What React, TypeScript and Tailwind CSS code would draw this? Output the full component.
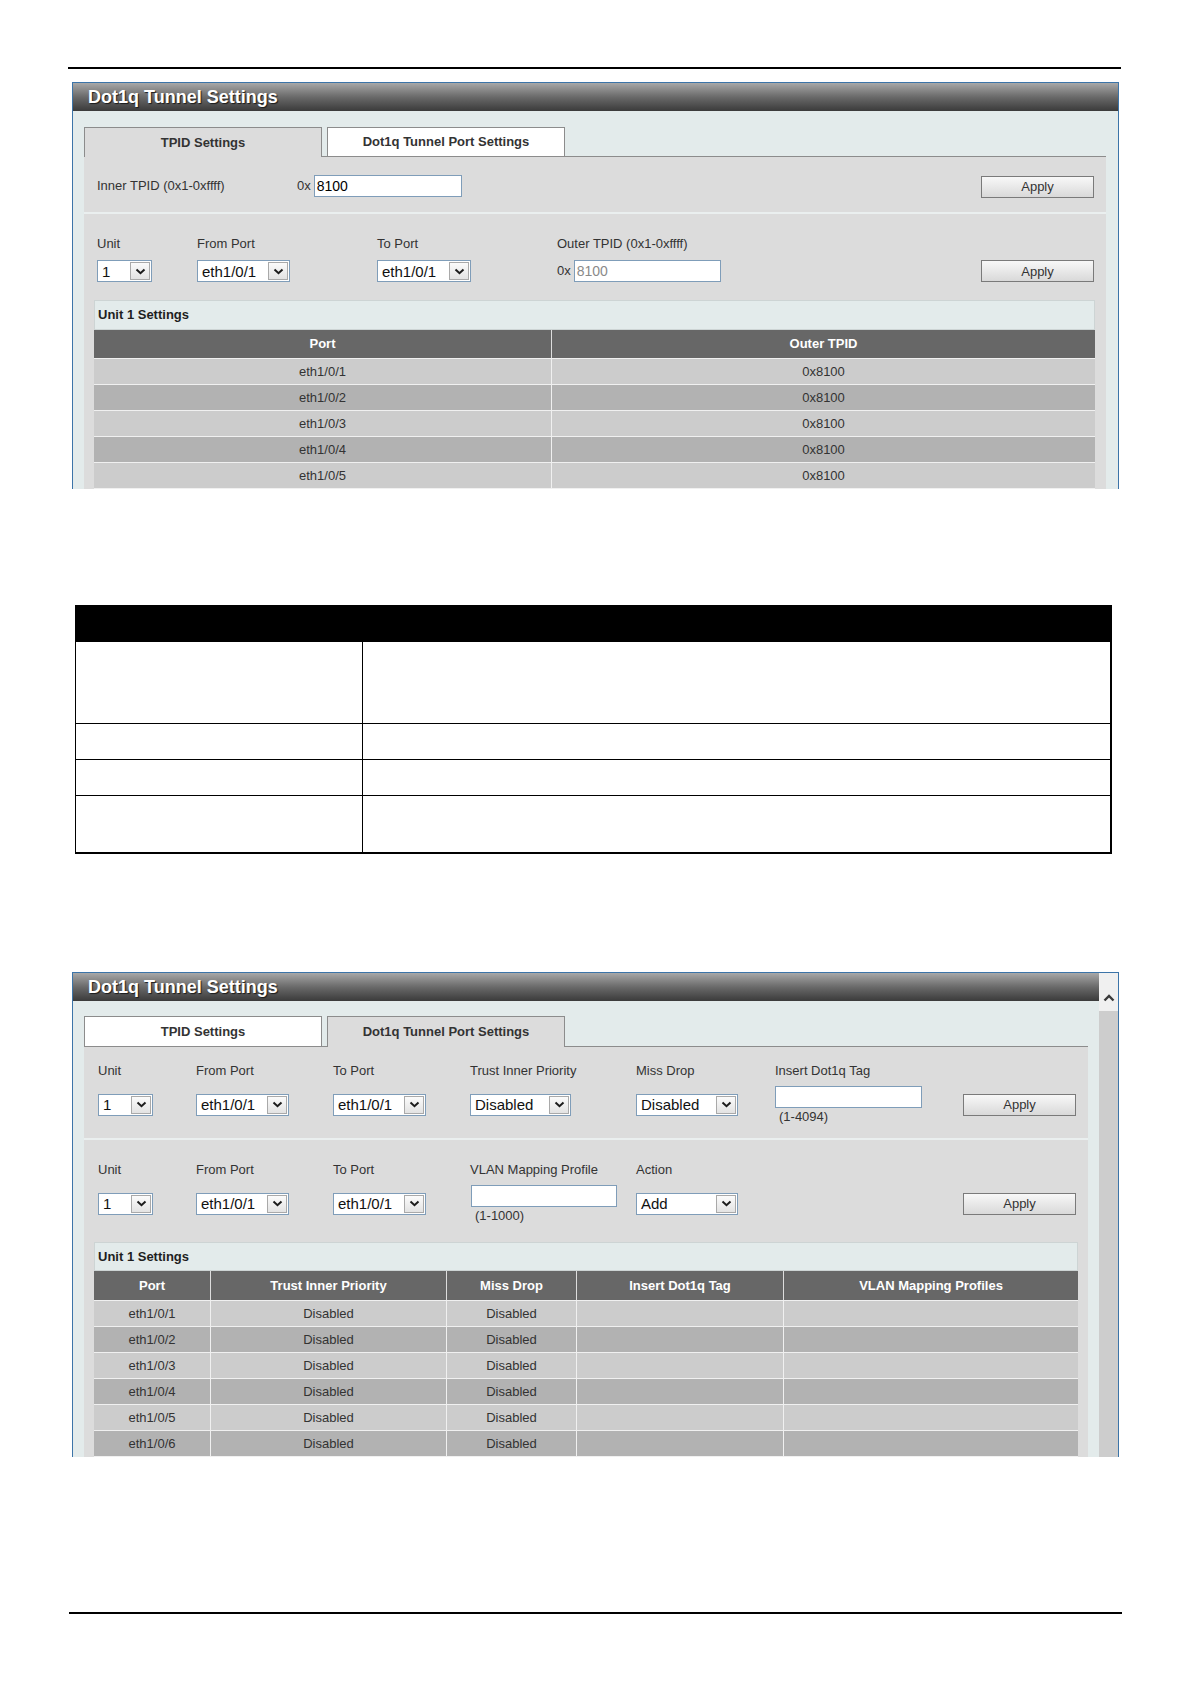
import type { ReactNode } from 'react';

const Chevron = () => (
  <svg width="11" height="7" viewBox="0 0 11 7">
    <polyline points="1.5,1.5 5.5,5.2 9.5,1.5" fill="none" stroke="#1c1c1c" strokeWidth="2" />
  </svg>
);

const Select = ({ value, width }: { value: string; width: string }) => (
  <div className={`${width} h-[22px] flex items-center border border-[#7f9db9] bg-white`}>
    <span className="flex-1 pl-[4px] text-[15px] leading-none text-[#111]">{value}</span>
    <span className="w-[20px] h-[18px] mr-[1px] flex items-center justify-center border border-[#a9a9a9] bg-linear-to-b from-[#fbfbfb] to-[#e3e3e3]">
      <Chevron />
    </span>
  </div>
);

const TextInput = ({ value = '', width, muted = false }: { value?: string; width: string; muted?: boolean }) => (
  <div
    className={`${width} h-[22px] flex items-center border border-[#7f9db9] bg-white pl-[2px] text-[14px] leading-none ${
      muted ? 'text-[#8a8a8a]' : 'text-black'
    }`}
  >
    {value}
  </div>
);

const ApplyButton = () => (
  <button className="w-[113px] h-[22px] border border-[#7a7a7a] bg-linear-to-b from-[#f8f8f8] to-[#d9d9d9] text-[13px] leading-none text-[#333]">
    Apply
  </button>
);

const Label = ({ children }: { children: ReactNode }) => (
  <span className="h-[16px] text-[13px] leading-[16px] text-[#333] whitespace-nowrap">{children}</span>
);

const Note = ({ children }: { children: ReactNode }) => (
  <span className="mt-[1px] pl-[4px] text-[13px] leading-[15px] text-[#333]">{children}</span>
);

const TitleBar = () => (
  <div className="h-[28px] shrink-0 flex items-center pl-[15px] bg-linear-to-b from-[#a8a8a8] via-[#6a6a6a] to-[#3b3b3b]">
    <span className="text-[18px] font-bold leading-none text-white [text-shadow:1px_1px_1px_#1a1a1a]">
      Dot1q Tunnel Settings
    </span>
  </div>
);

const tabLabels = ['TPID Settings', 'Dot1q Tunnel Port Settings'];

const Tabs = ({ active, height }: { active: number; height: string }) => (
  <div className={`flex items-end shrink-0 ${height}`}>
    {tabLabels.map((label, i) => (
      <div key={label} className="flex items-end h-full">
        {i > 0 && <div className="w-[5px] h-full border-b border-[#8c8c8c]" />}
        <div
          className={`w-[238px] h-full flex items-center justify-center text-[13px] font-bold text-[#333] border border-[#8c8c8c] ${
            i === active ? 'border-b-0 bg-[#dcdcdc]' : 'bg-white'
          }`}
        >
          {label}
        </div>
      </div>
    ))}
    <div className="flex-1 h-full border-b border-[#8c8c8c]" />
  </div>
);

const SettingsTable = ({
  cols,
  headers,
  rows,
  boxHeight,
  headHeight,
}: {
  cols: string;
  headers: string[];
  rows: string[][];
  boxHeight: string;
  headHeight: string;
}) => (
  <div>
    <div className={`${boxHeight} flex items-center pl-[3px] border border-[#cdd4d4] bg-[#e3ebeb] text-[13px] font-bold text-[#1e1e1e]`}>
      Unit 1 Settings
    </div>
    <div className={`grid ${cols}`}>
      {headers.map((h, i) => (
        <div
          key={h}
          className={`${headHeight} flex items-center justify-center bg-[#676767] text-[13px] font-bold text-white ${
            i < headers.length - 1 ? 'border-r border-[#dddddd]' : ''
          }`}
        >
          {h}
        </div>
      ))}
      {rows.map((row, r) =>
        row.map((cell, c) => (
          <div
            key={`${r}-${c}`}
            className={`h-[26px] flex items-center justify-center border-t border-[#f0f0f0] text-[13px] text-[#333] ${
              r % 2 === 0 ? 'bg-[#cccccc]' : 'bg-[#b2b2b2]'
            } ${c < row.length - 1 ? 'border-r' : ''}`}
          >
            {cell}
          </div>
        ))
      )}
      {/* next row, below the visible edge */}
      {headers.map((h) => (
        <div key={`blank-${h}`} className="h-[26px] border-t border-[#f0f0f0] bg-[#cccccc]" />
      ))}
    </div>
  </div>
);

const TpidPanel = () => {
  const rows = [1, 2, 3, 4, 5].map((n) => [`eth1/0/${n}`, '0x8100']);
  return (
    <div className="ml-[72px] w-[1047px] h-[407px] overflow-hidden border-t border-x border-[#3c74a8]">
      <TitleBar />
      <div className="h-full bg-[#e3ebeb] pt-[16px] pl-[11px] pr-[12px]">
        <Tabs active={0} height="h-[30px]" />
        <div className="h-full bg-[#dcdcdc]">
          <div className="flex items-center pt-[17px] pb-[14px] pl-[13px] pr-[12px] border-b-2 border-[#eaefef]">
            <span className="w-[200px] text-[13px] text-[#333]">Inner TPID (0x1-0xffff)</span>
            <span className="text-[13px] text-[#333]">0x</span>
            <div className="ml-[3px]">
              <TextInput value="8100" width="w-[148px]" />
            </div>
            <div className="ml-auto">
              <ApplyButton />
            </div>
          </div>

          <div className="pt-[22px] pl-[13px] pr-[12px] grid grid-cols-[100px_180px_180px_1fr_113px] gap-y-[8px] items-center">
            <Label>Unit</Label>
            <Label>From Port</Label>
            <Label>To Port</Label>
            <Label>Outer TPID (0x1-0xffff)</Label>
            <span />
            <Select value="1" width="w-[55px]" />
            <Select value="eth1/0/1" width="w-[93px]" />
            <Select value="eth1/0/1" width="w-[94px]" />
            <div className="flex items-center">
              <span className="text-[13px] text-[#333]">0x</span>
              <div className="ml-[3px]">
                <TextInput value="8100" width="w-[147px]" muted />
              </div>
            </div>
            <ApplyButton />
          </div>

          <div className="mt-[18px] ml-[10px] mr-[11px]">
            <SettingsTable
              cols="grid-cols-[458px_1fr]"
              headers={['Port', 'Outer TPID']}
              rows={rows}
              boxHeight="h-[30px]"
              headHeight="h-[28px]"
            />
          </div>
        </div>
      </div>
    </div>
  );
};

const PortPanel = () => {
  const rows = [1, 2, 3, 4, 5, 6].map((n) => [`eth1/0/${n}`, 'Disabled', 'Disabled', '', '']);
  return (
    <div className="ml-[72px] w-[1047px] h-[485px] overflow-hidden flex border-t border-x border-[#3c74a8]">
      <div className="w-[1026px] flex flex-col">
        <TitleBar />
        <div className="flex-1 bg-[#e3ebeb] pt-[15px] pl-[11px] pr-[11px]">
          <Tabs active={1} height="h-[31px]" />
          <div className="h-full bg-[#dcdcdc]">
            <div className="pt-[16px] pb-[15px] pl-[14px] pr-[12px] border-b-2 border-[#eaefef] grid grid-cols-[98px_137px_137px_166px_139px_1fr_113px] grid-rows-[16px_37px] gap-y-[7px] items-center">
              <Label>Unit</Label>
              <Label>From Port</Label>
              <Label>To Port</Label>
              <Label>Trust Inner Priority</Label>
              <Label>Miss Drop</Label>
              <Label>Insert Dot1q Tag</Label>
              <span />
              <Select value="1" width="w-[55px]" />
              <Select value="eth1/0/1" width="w-[93px]" />
              <Select value="eth1/0/1" width="w-[93px]" />
              <Select value="Disabled" width="w-[101px]" />
              <Select value="Disabled" width="w-[102px]" />
              <div className="flex flex-col">
                <TextInput width="w-[147px]" />
                <Note>(1-4094)</Note>
              </div>
              <ApplyButton />
            </div>

            <div className="pt-[22px] pl-[14px] pr-[12px] grid grid-cols-[98px_137px_137px_166px_1fr_113px] grid-rows-[16px_39px] gap-y-[6px] items-center">
              <Label>Unit</Label>
              <Label>From Port</Label>
              <Label>To Port</Label>
              <Label>VLAN Mapping Profile</Label>
              <Label>Action</Label>
              <span />
              <Select value="1" width="w-[55px]" />
              <Select value="eth1/0/1" width="w-[93px]" />
              <Select value="eth1/0/1" width="w-[93px]" />
              <div className="flex flex-col ml-[1px]">
                <TextInput width="w-[146px]" />
                <Note>(1-1000)</Note>
              </div>
              <Select value="Add" width="w-[102px]" />
              <ApplyButton />
            </div>

            <div className="mt-[19px] ml-[10px] mr-[10px]">
              <SettingsTable
                cols="grid-cols-[117px_236px_130px_207px_1fr]"
                headers={['Port', 'Trust Inner Priority', 'Miss Drop', 'Insert Dot1q Tag', 'VLAN Mapping Profiles']}
                rows={rows}
                boxHeight="h-[29px]"
                headHeight="h-[29px]"
              />
            </div>
          </div>
        </div>
      </div>

      {/* scrollbar */}
      <div className="w-[19px] flex flex-col">
        <div className="h-[38px] shrink-0 flex items-end justify-center pb-[9px] bg-[#f0f0f0]">
          <svg width="12" height="8" viewBox="0 0 12 8">
            <polyline points="1.5,6.5 6,2 10.5,6.5" fill="none" stroke="#3a3a3a" strokeWidth="2.4" />
          </svg>
        </div>
        <div className="flex-1 bg-[#cdcdcd]" />
      </div>
    </div>
  );
};

const DescriptionTable = () => {
  const rowHeights = ['h-[81px]', 'h-[36px] border-t', 'h-[36px] border-t', 'h-[57px] border-t'];
  return (
    <div className="ml-[75px] w-[1037px] border border-r-2 border-b-2 border-black">
      <div className="h-[36px] bg-black" />
      {rowHeights.map((h, i) => (
        <div key={i} className={`flex border-black ${h}`}>
          <div className="w-[287px] border-r border-black" />
          <div className="flex-1" />
        </div>
      ))}
    </div>
  );
};

export default function App() {
  return (
    <div className="w-[1192px] h-[1684px] overflow-hidden bg-white pt-[67px] font-['Liberation_Sans',Arial,sans-serif]">
      <div className="ml-[68px] w-[1053px] h-[2px] bg-black" />
      <div className="mt-[13px]">
        <TpidPanel />
      </div>
      <div className="mt-[116px]">
        <DescriptionTable />
      </div>
      <div className="mt-[118px]">
        <PortPanel />
      </div>
      <div className="mt-[155px] ml-[69px] w-[1053px] h-[2px] bg-black" />
    </div>
  );
}
